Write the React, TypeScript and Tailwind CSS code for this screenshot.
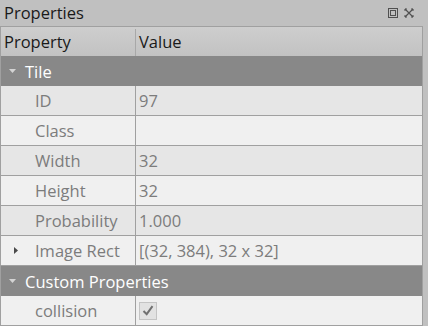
import React from "react";

type Row =
  | { kind: "group"; label: string }
  | { kind: "prop"; name: string; value?: string; alt: boolean; expandable?: boolean; check?: boolean };

const rows: Row[] = [
  { kind: "group", label: "Tile" },
  { kind: "prop", name: "ID", value: "97", alt: true },
  { kind: "prop", name: "Class", value: "", alt: false },
  { kind: "prop", name: "Width", value: "32", alt: true },
  { kind: "prop", name: "Height", value: "32", alt: false },
  { kind: "prop", name: "Probability", value: "1.000", alt: true },
  { kind: "prop", name: "Image Rect", value: "[(32, 384), 32 x 32]", alt: false, expandable: true },
  { kind: "group", label: "Custom Properties" },
  { kind: "prop", name: "collision", alt: false, check: true },
];

function DownArrow() {
  return (
    <svg width="9" height="6" viewBox="0 0 9 6" className="shrink-0">
      <path d="M1 1h7l-3.5 4z" fill="#d4d4d4" />
    </svg>
  );
}

function RightArrow() {
  return (
    <svg width="6" height="9" viewBox="0 0 6 9" className="shrink-0">
      <path d="M1 1v7l4-3.5z" fill="#4a4a4a" />
    </svg>
  );
}

export default function App() {
  return (
    <div className="w-[428px] h-[326px] bg-[#c0c0c0] flex flex-col font-['Open_Sans',sans-serif] text-[16.5px] overflow-hidden">
      {/* Title bar */}
      <div className="h-[26px] flex items-center pl-[4px] pr-[14px] shrink-0">
        <span className="text-[#1a1a1a] leading-none">Properties</span>
        <div className="ml-auto flex items-center gap-[6px]">
          <svg width="10" height="10" viewBox="0 0 10 10">
            <rect x="0.5" y="0.5" width="9" height="9" fill="none" stroke="#505050" />
            <rect x="2.5" y="2.5" width="5" height="5" fill="none" stroke="#505050" />
          </svg>
          <svg width="10" height="10" viewBox="0 0 10 10">
            <path d="M1 1l8 8M9 1l-8 8" stroke="#505050" strokeWidth="1.2" />
            <path d="M1 1l2 0M1 1l0 2M9 1l-2 0M9 1l0 2M1 9l2 0M1 9l0-2M9 9l-2 0M9 9l0-2" stroke="#505050" />
          </svg>
        </div>
      </div>

      {/* Table */}
      <div className="flex-1 mr-[5px] border-t border-l border-r border-[#a0a0a0] bg-[#f0f0f0] flex flex-col">
        <div className="h-[29px] flex bg-gradient-to-b from-[#cecece] to-[#c2c2c2] shrink-0 text-[#1a1a1a] pt-[2px]">
          <div className="w-[135px] border-r border-[#a8a8a8] flex items-center pl-[3px]">Property</div>
          <div className="flex-1 flex items-center pl-[3px]">Value</div>
        </div>

        {rows.map((row, i) =>
          row.kind === "group" ? (
            <div key={i} className="h-[30px] shrink-0 bg-[#888888] flex items-center pl-[7px] gap-[8px] text-white">
              <DownArrow />
              <span className="pt-[2px]">{row.label}</span>
            </div>
          ) : (
            <div
              key={i}
              className={`h-[30px] shrink-0 flex border-b border-[#a0a0a0] text-[#7c7c7c] ${row.alt ? "bg-[#e6e6e6]" : "bg-[#f0f0f0]"}`}
            >
              <div className="w-[135px] border-r border-[#a0a0a0] flex items-center">
                <div className="w-[34px] flex pl-[12px]">{row.expandable && <RightArrow />}</div>
                <span className="pt-[2px]">{row.name}</span>
              </div>
              <div className="flex-1 flex items-center pl-[3px]">
                {row.check ? (
                  <div className="w-[18px] h-[18px] border border-[#c4c4c4] bg-[#e2e2e2] flex items-center justify-center">
                    <svg width="12" height="11" viewBox="0 0 12 11">
                      <path d="M1.5 6l3.2 3.2 5.8-8" fill="none" stroke="#707070" strokeWidth="2" />
                    </svg>
                  </div>
                ) : (
                  <span className="pt-[2px]">{row.value}</span>
                )}
              </div>
            </div>
          )
        )}
      </div>
    </div>
  );
}
